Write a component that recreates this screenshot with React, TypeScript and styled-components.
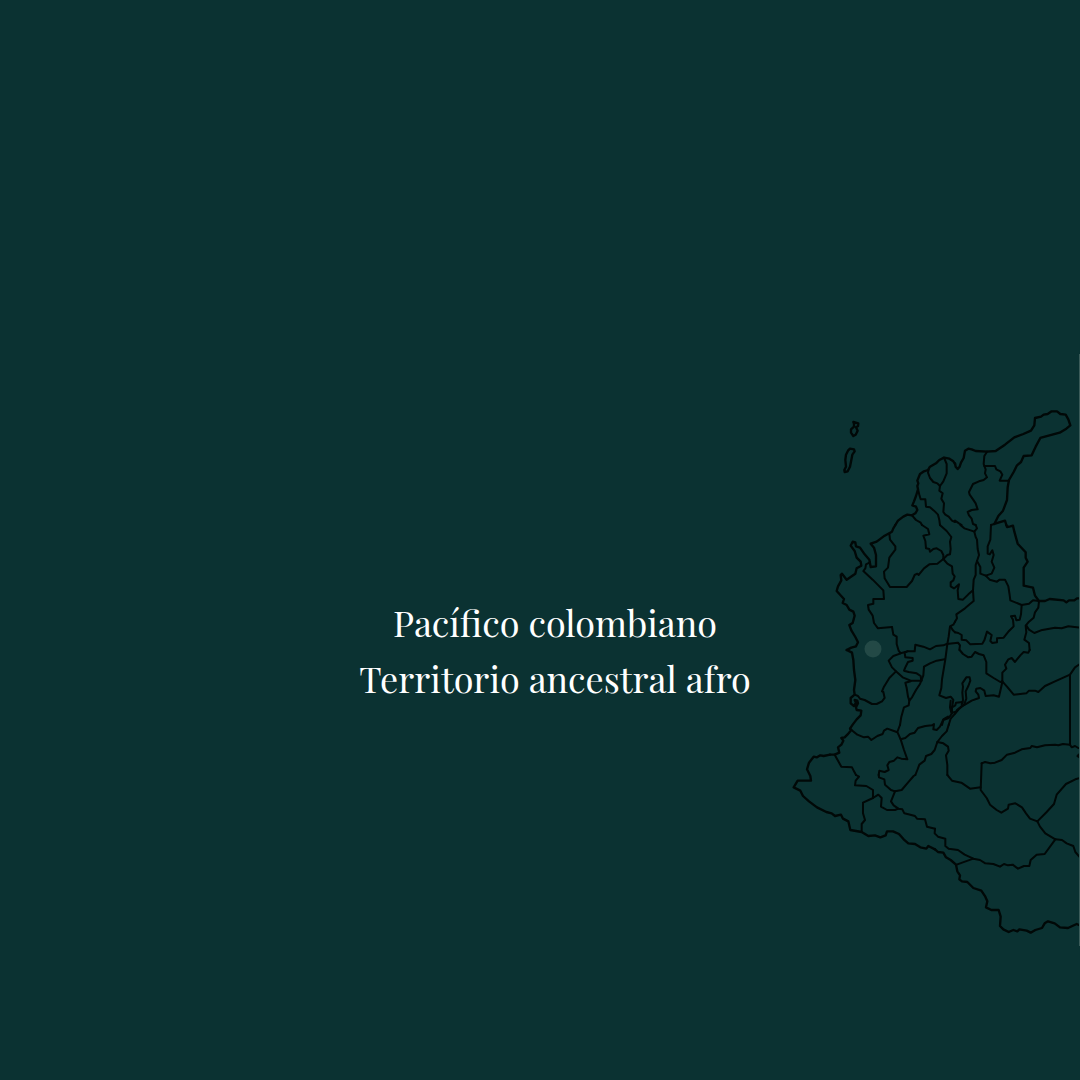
import React from "react";
import styled, { createGlobalStyle } from "styled-components";

const GlobalStyle = createGlobalStyle`
  body {
    margin: 0;
    background: #0b3232;
  }
`;

const Stage = styled.main`
  display: grid;
  grid-template: 1fr / 1fr;
  align-items: center;
  box-sizing: border-box;
  min-height: 100vh;
  padding-top: 220px;
  overflow: hidden;
`;

const Title = styled.h1`
  grid-area: 1 / 1;
  justify-self: center;
  margin: 0;
  padding-left: 30px;
  color: #ffffff;
  font-family: "Playfair Display", "Liberation Serif", serif;
  font-size: 36px;
  font-weight: 400;
  line-height: 56px;
  text-align: center;
`;

const TitleLine = styled.span`
  display: block;
`;

const MapFrame = styled.figure`
  grid-area: 1 / 1;
  justify-self: end;
  margin: 0;
  border-right: 1px solid #3c5c5a;
`;

const MapDrawing = styled.svg`
  display: block;
  width: 299px;
  height: 592px;
  fill: none;
  stroke: #010807;
  stroke-linecap: round;
  stroke-linejoin: round;
`;

const Border = styled.polyline<{ $outer?: boolean }>`
  stroke-width: ${(p) => (p.$outer ? 7 : 6)};
`;

const Marker = styled.circle`
  fill: #234946;
  stroke: none;
`;

type Sheet = { x: number; y: number; outer: string[]; inner: string[] };

// The map is kept in sheets; each has its own origin and three units per map unit.
const sheets: Sheet[] = [
  {
    x: 830,
    y: 400,
    outer: [
      "70,66 85,70 84,78 78,82 83,92 77,104 70,108 63,98 63,88 72,80 72,72 70,66",
      "60,146 72,148 74,154 67,164 64,180 60,200 53,214 44,216 43,210 48,200 46,180 48,164 54,152 60,146",
      "196,375 204,362 220,350 232,344 246,346 256,340 262,330 258,320 247,316 252,304 258,288 264,268 262,258 265,250 262,242 270,222 282,214 294,210 300,200 318,190 328,180 342,173 358,176 370,184 375,192",
    ],
    inner: [
      "342,173 350,192 350,220 340,244 330,258 322,250 310,246 300,234 294,218 296,208",
      "330,258 328,272 338,280 334,296 342,310 340,336 346,344 356,350 366,362 375,366",
      "264,268 268,284 272,298 286,298 288,320 300,322 312,332 324,344 328,360 330,375",
      "246,346 258,360 272,368 276,375",
    ],
  },
  {
    x: 955,
    y: 400,
    outer: [
      "0,190 2,200 8,207 14,200 18,188 26,174 30,152 40,146 50,148 62,153 96,155 122,153 150,134 178,112 205,102 228,92 238,76 240,54 258,50 266,44 278,42 290,34 306,34 316,42 332,44 340,58 346,76 334,86 314,98 256,114 242,140 230,166 206,168 198,186 186,196 176,216 162,240 158,262 156,300 150,316 144,332 130,348 118,372 130,368 150,362 154,375",
    ],
    inner: [
      "96,155 88,168 86,192 88,198 92,208 90,220 96,232 86,240 72,244 54,252 42,276 44,284 54,298 62,310 68,328 50,330 38,336 42,346 50,356 54,372 62,375",
      "88,198 120,198 124,208 136,214 142,224 134,242 160,242",
      "0,362 12,370 20,375",
      "118,372 108,375",
    ],
  },
  {
    x: 830,
    y: 525,
    outer: [
      "196,0 190,10 186,20 164,32 140,50 122,56 132,68 138,90 138,124 122,126 118,104 104,88 90,68 78,64 76,52 68,50 62,62 74,78 80,98 92,110 94,122 80,130 76,146 50,164 36,146 32,150 34,166 24,184 20,198 42,222 38,234 50,240 58,254 70,260 74,272 68,294 58,300 64,316 76,336 84,352 78,364 64,368 54,373 50,375",
    ],
    inner: [
      "178,26 180,44 196,64 196,74 178,98 174,128 162,140 164,160 180,186 230,186 246,168 254,150 262,146 266,150 282,130 298,118 322,116 340,102 352,90 360,88 362,72 360,50 364,36 350,18 334,4 330,0",
      "276,0 294,12 298,28 280,32 286,48 288,70 298,72 300,80 310,72 320,70 334,78 340,90 340,102",
      "340,102 352,116 366,124 368,146 374,154 370,166 362,172 362,184 372,190",
      "120,112 108,118 106,130 100,138 128,164 160,196 162,222 130,222 130,236 114,240 116,254 128,272 132,294 144,310 186,306",
    ],
  },
  {
    x: 955,
    y: 525,
    outer: [
      "154,0 156,6 166,4 174,2 178,20 188,56 212,82 212,98 218,110 206,128 206,182 234,188 240,212 252,228 270,228 284,222 326,226 334,232 342,226 358,226 366,220 375,220",
    ],
    inner: [
      "16,0 28,10 40,14 58,20 66,10 62,0",
      "58,20 62,36 66,44 68,72 72,90 66,108 76,126 76,146 92,152 110,146 118,128 110,110 116,90 112,76 104,88 98,86 98,64 106,44 108,0",
      "66,108 62,120 62,150 56,164 54,196 56,228 44,238 30,250 4,268 6,280 0,290",
      "54,196 40,208 24,224 10,222 8,196 12,178 0,188",
      "92,152 104,164 126,170 134,164 150,164 160,184 164,210 166,226 200,240 198,268 194,284 184,286 180,272 168,274 174,284 176,304 162,318 146,338 126,340 126,352 112,354 106,348 110,330 96,320 88,346 82,356 46,358 34,346 20,344 20,330 10,324 0,322",
      "200,240 222,236 234,226 252,228 250,248 240,262 236,278 222,290 212,302 214,322 208,344 222,354 224,375",
      "214,302 222,314 238,324 258,316 300,308 320,310 340,304 375,308",
    ],
  },
  {
    x: 880,
    y: 600,
    outer: [],
    inner: [
      "36,81 40,104 50,110 50,132 56,152 62,160 82,154 104,154 106,134 130,140 150,148 168,138 190,136 200,132 234,128 240,136 238,150",
      "62,160 40,168 26,182 36,202 46,212 68,232 92,242 124,242",
      "82,154 74,158 76,172 98,174 98,182 84,186 76,202 72,212 86,216 110,220 122,228 124,242",
      "124,242 130,226 132,200 150,190 170,182 194,178",
      "225,65 220,74 210,79 206,110 202,132 196,178 190,214 186,238 184,264 178,286 198,294 212,290 220,300 216,322 216,340 206,354 190,360 186,375",
      "212,80 218,90 225,97",
      "124,242 120,252 108,270 96,292 88,302 84,290 80,264 76,248 92,244",
      "88,302 86,316 72,322 64,350 60,375",
      "216,322 226,316 228,308 248,306",
      "206,375 212,356 226,340 236,328 252,314",
      "212,302 210,322 214,338 226,336",
    ],
  },
  {
    x: 830,
    y: 650,
    outer: [
      "50,0 66,8 70,30 72,60 76,90 72,120 74,134 62,144 62,160 72,168 78,158 74,150 82,152 84,160 78,172 80,180 94,182 92,196 80,208 68,224 60,236 64,240 52,254 44,262 34,264 40,272 34,284 24,292 28,308 14,314 0,314",
    ],
    inner: [
      "74,134 84,138 90,146 104,150 126,162 140,162 156,154 164,144 160,126 156,124 162,110 178,84 198,64",
      "60,236 82,254 102,262 114,260 124,270 142,258 158,252 162,242 172,236 200,246",
      "14,314 34,350 66,352 72,364 78,375",
      "210,225 202,246 212,268 222,300 232,328 214,326 202,322 192,332 178,336 172,346 176,360 164,366 148,362 146,375",
      "212,268 226,264 240,252 254,248 264,234 286,228 306,226 312,222 310,238 320,240 330,230 340,208 354,200",
      "356,225 350,244 336,258 322,276 314,300 304,312 288,318 284,332 268,344 262,360 256,375",
      "322,276 340,280 354,290 356,302 348,316 352,345 352,375",
    ],
  },
  {
    x: 955,
    y: 650,
    outer: ["372,314 368,318 374,322"],
    inner: [
      "224,0 220,8 206,6 196,16 186,28 180,36 170,24 160,28 150,44 154,56 142,68 142,96 132,140 116,136 92,138 88,122 76,114 64,116 62,124 70,134 72,144 50,152 30,164 18,170 6,180 0,190",
      "14,0 24,12 40,22 50,20 60,6 72,12 86,16 94,36 94,70 116,84 136,96 142,94",
      "142,94 156,110 176,134 214,130 222,122 240,122 250,126 270,108 300,94 345,74 360,52 375,42",
      "345,74 345,284",
      "80,340 90,336 106,340 120,338 140,330 156,314 180,308 200,298 226,294 230,288 246,292 270,286 300,284 310,286 324,282 345,284 350,292 360,288 370,294",
      "20,164 24,150 22,128 24,110 22,100 34,82 44,82 46,92 40,108 32,124 34,146 28,162",
    ],
  },
  {
    x: 785,
    y: 740,
    outer: [
      "135,44 116,48 106,46 96,52 86,50 72,68 66,88 76,108 78,122 38,122 26,142 46,152 54,168 72,184 96,202 124,216 140,220 150,228 168,224 174,236 190,244 196,270 230,276 250,288 270,286 286,292 302,286 306,274 324,274 342,282 356,298 370,310 390,312 406,322 424,326 430,318 450,328",
    ],
    inner: [
      "213,105 222,110 212,122 210,136 244,138 264,150 264,174 234,188 234,220 240,240 230,252 230,276",
      "264,174 280,164 290,174 288,200 306,210 330,210 340,206",
      "281,105 282,112 298,118 300,134 318,150 330,154 350,150 372,124 386,108 391,105",
      "330,154 318,184 326,196 340,206 352,208 358,220 376,224 390,228 396,236 420,238 426,260 450,266",
    ],
  },
  {
    x: 930,
    y: 740,
    outer: [],
    inner: [
      "52,105 56,110 66,122 94,128 120,146 152,142",
      "155,70 152,150 170,174 180,194 200,210 214,218 234,206 236,194 256,190 276,202 288,220 300,236 322,244",
      "450,114 436,118 408,132 380,164 372,192 350,216 322,244",
      "322,244 330,260 346,280 376,298 396,300 410,310 430,318 436,336 450,352",
    ],
  },
  {
    x: 930,
    y: 820,
    outer: [
      "15,88 24,96 40,98 48,112 62,120 78,134 82,154 90,166 88,178 96,184 112,186 130,204 154,212 166,230 172,244 168,262 184,270 206,270 212,290 210,318 220,328 236,336 250,330 262,334 268,328 290,332 302,338 316,330 336,324 344,310 354,304 374,310 390,322 414,324 440,312 450,316",
    ],
    inner: [
      "376,58 344,102 320,104 302,120 298,138 282,138 264,146 248,134 234,136 222,132 210,140 190,132 166,130 150,120 130,116 104,104 84,90 56,86 46,78 46,56 24,50 14,40 15,26",
      "130,116 80,134",
    ],
  },
];

function ColombiaMap() {
  return (
    <MapFrame>
      <MapDrawing viewBox="780 354 299 592" aria-hidden="true">
        <Marker cx="873" cy="649" r="8.5" />
        {sheets.map(({ x, y, outer, inner }) => (
          <g key={`${x}-${y}`} transform={`translate(${x} ${y}) scale(0.33333)`}>
            {inner.map((points) => (
              <Border key={points} points={points} />
            ))}
            {outer.map((points) => (
              <Border key={points} points={points} $outer />
            ))}
          </g>
        ))}
      </MapDrawing>
    </MapFrame>
  );
}

export default function App() {
  return (
    <>
      <GlobalStyle />
      <Stage>
        <Title>
          <TitleLine>Pacífico colombiano</TitleLine>
          <TitleLine>Territorio ancestral afro</TitleLine>
        </Title>
        <ColombiaMap />
      </Stage>
    </>
  );
}
